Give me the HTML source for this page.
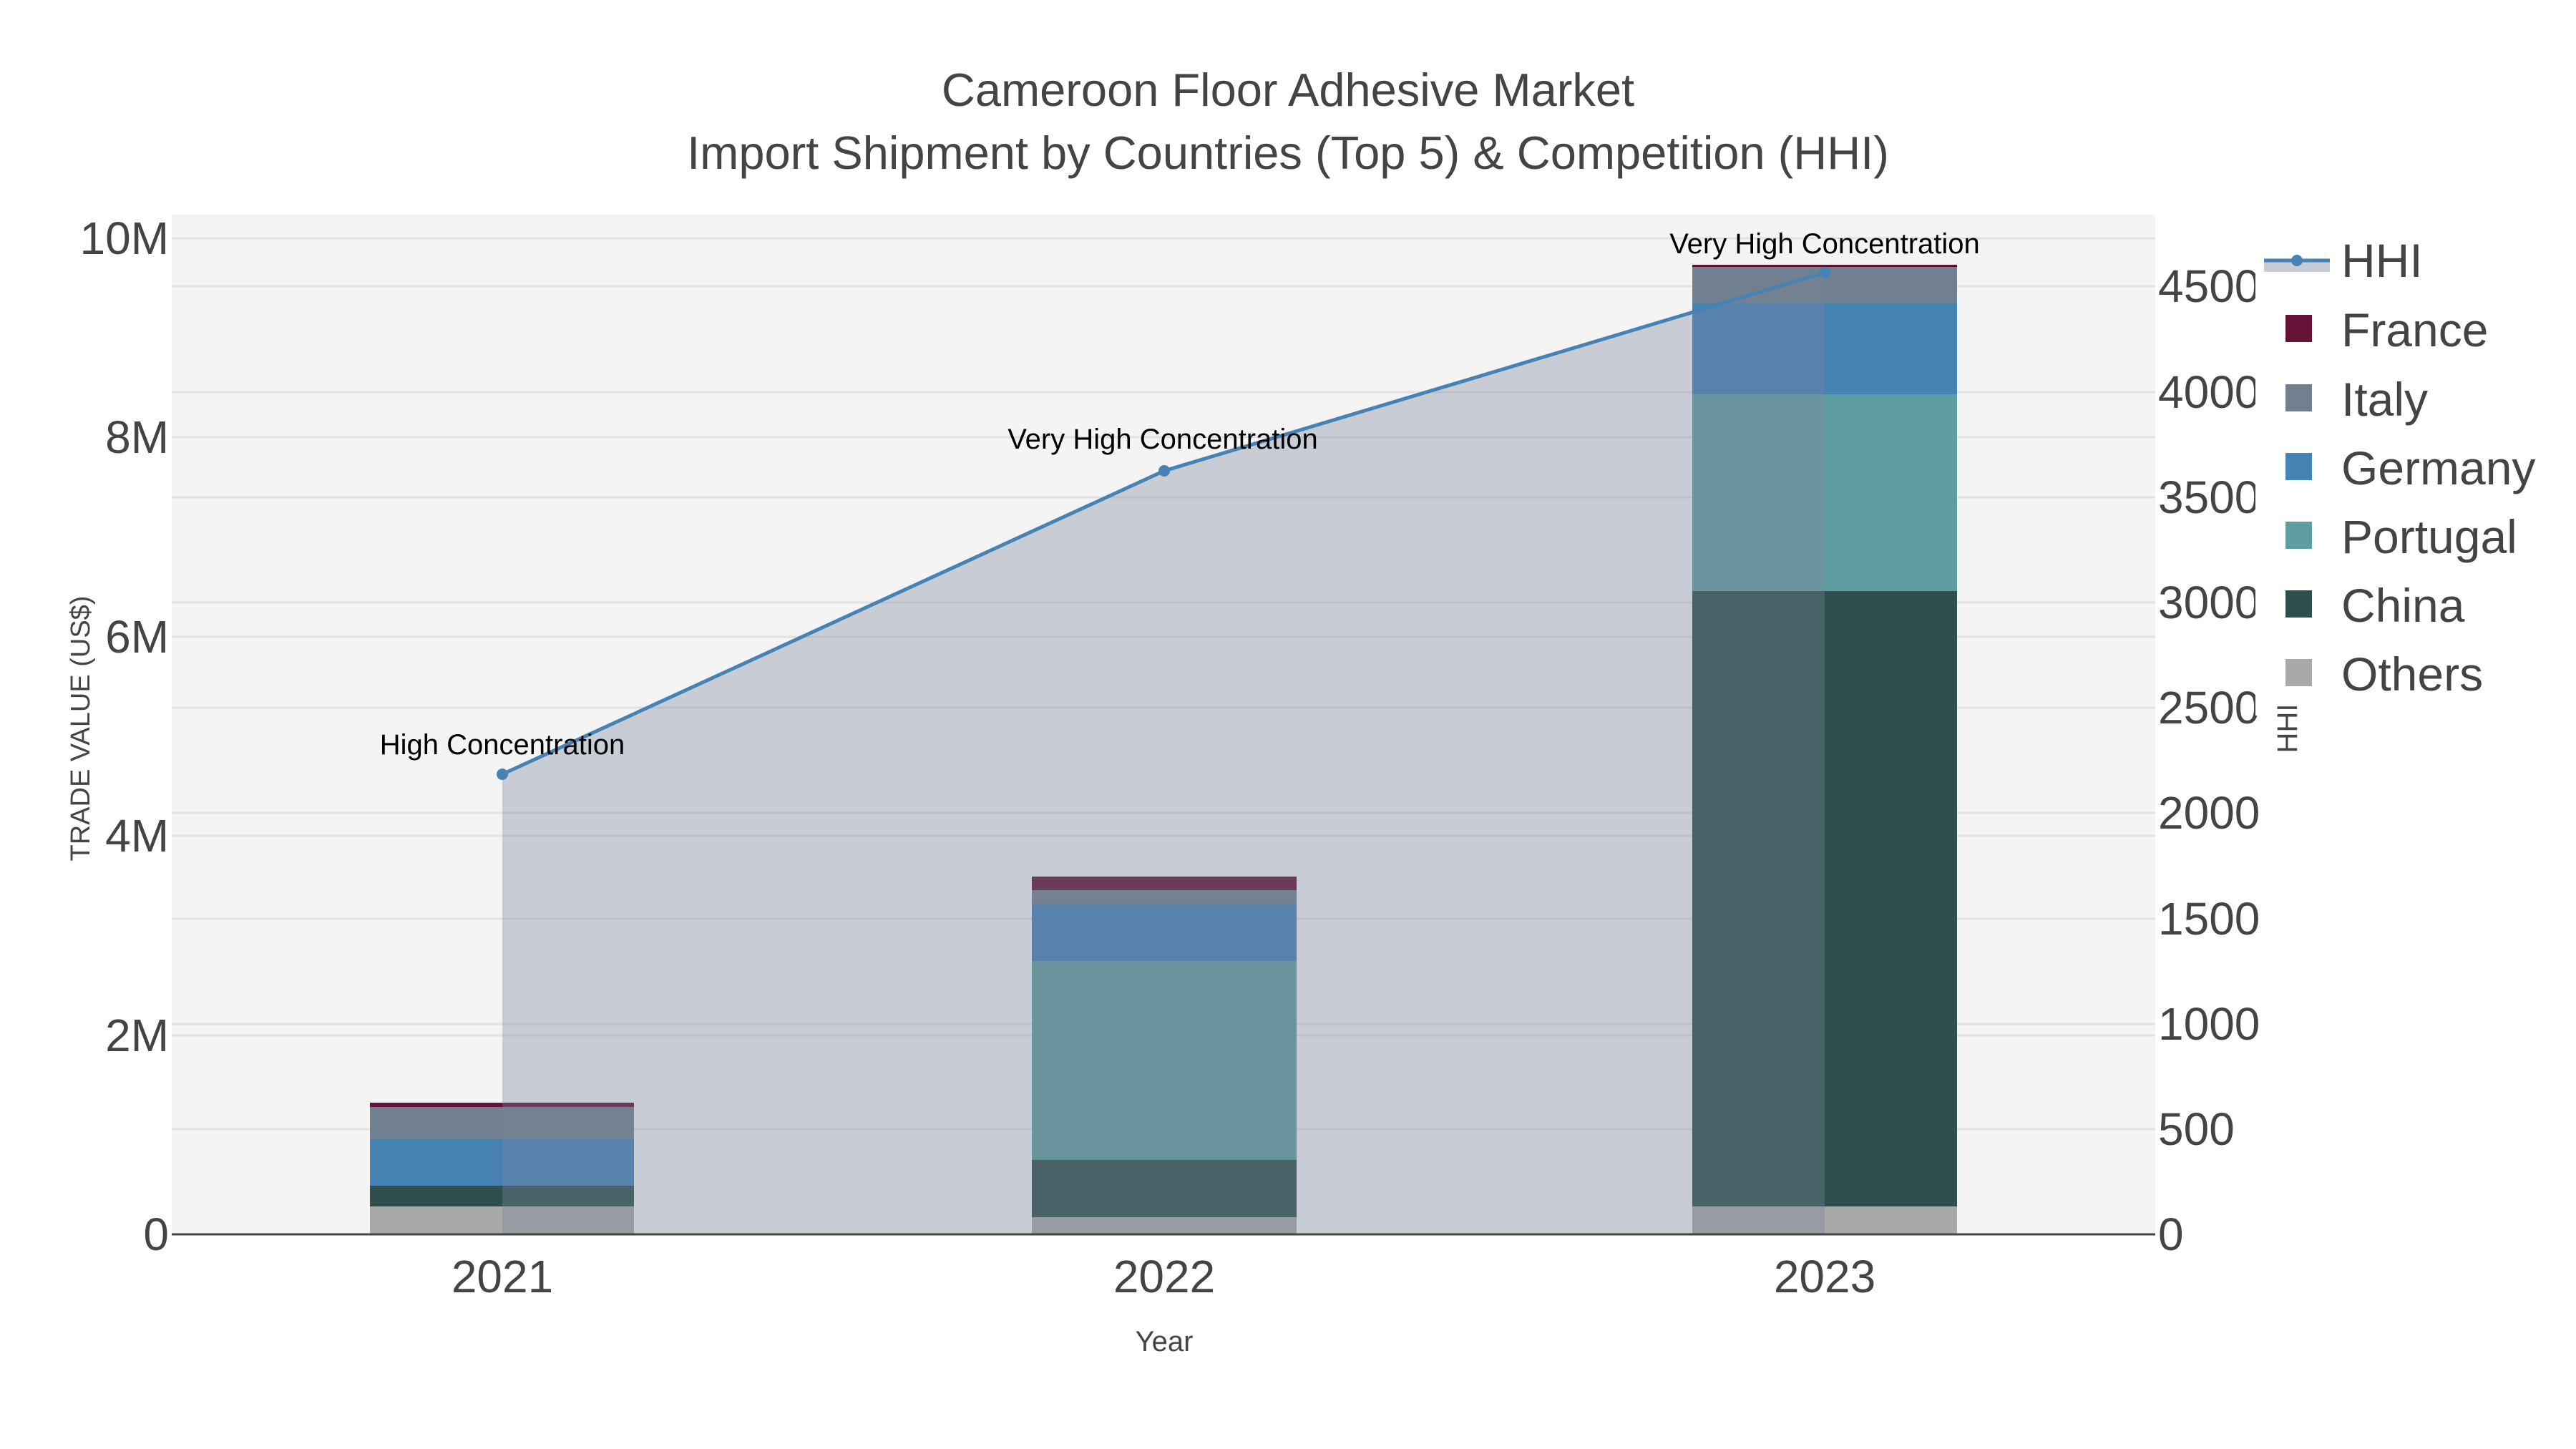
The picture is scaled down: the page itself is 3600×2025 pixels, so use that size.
<!DOCTYPE html>
<html><head><meta charset="utf-8"><style>html,body{margin:0;padding:0;background:#fff}svg{display:block}</style></head>
<body>
<svg width="3600" height="2025" viewBox="0 0 3600 2025" xmlns="http://www.w3.org/2000/svg" font-family="Liberation Sans, Arial, sans-serif">
<rect width="3600" height="2025" fill="#fff"/>
<rect x="240" y="300" width="2772" height="1425" fill="#f4f4f4"/>
<g stroke="#e2e2e2" stroke-width="3">
<line x1="240" x2="3012" y1="1447" y2="1447"/><line x1="240" x2="3012" y1="1168" y2="1168"/><line x1="240" x2="3012" y1="890" y2="890"/><line x1="240" x2="3012" y1="611" y2="611"/><line x1="240" x2="3012" y1="333" y2="333"/>
<line x1="240" x2="3012" y1="1578" y2="1578"/><line x1="240" x2="3012" y1="1431" y2="1431"/><line x1="240" x2="3012" y1="1284" y2="1284"/><line x1="240" x2="3012" y1="1136" y2="1136"/><line x1="240" x2="3012" y1="989" y2="989"/><line x1="240" x2="3012" y1="842" y2="842"/><line x1="240" x2="3012" y1="695" y2="695"/><line x1="240" x2="3012" y1="548" y2="548"/><line x1="240" x2="3012" y1="400" y2="400"/>
</g>
<!-- 2021 -->
<rect x="517" y="1686" width="369" height="39" fill="#a9a9a9"/>
<rect x="517" y="1657" width="369" height="29" fill="#2f4f4f"/>
<rect x="517" y="1592" width="369" height="65" fill="#4682b4"/>
<rect x="517" y="1547" width="369" height="45" fill="#708090"/>
<rect x="517" y="1541" width="369" height="6" fill="#641235"/>
<!-- 2022 -->
<rect x="1442" y="1701" width="370" height="24" fill="#a9a9a9"/>
<rect x="1442" y="1621" width="370" height="80" fill="#2f4f4f"/>
<rect x="1442" y="1343" width="370" height="278" fill="#5f9ea0"/>
<rect x="1442" y="1263" width="370" height="80" fill="#4682b4"/>
<rect x="1442" y="1244" width="370" height="19" fill="#708090"/>
<rect x="1442" y="1225" width="370" height="19" fill="#641235"/>
<!-- 2023 -->
<rect x="2365" y="1686" width="370" height="39" fill="#a9a9a9"/>
<rect x="2365" y="826" width="370" height="860" fill="#2f4f4f"/>
<rect x="2365" y="551" width="370" height="275" fill="#5f9ea0"/>
<rect x="2365" y="424" width="370" height="127" fill="#4682b4"/>
<rect x="2365" y="373" width="370" height="51" fill="#708090"/>
<rect x="2365" y="370" width="370" height="3" fill="#641235"/>
<polygon points="702,1082 1627,658 2550,381 2550,1725 702,1725" fill="rgb(120,131,154)" fill-opacity="0.355"/>
<line x1="240" x2="3012" y1="1725" y2="1725" stroke="#444" stroke-width="3"/>
<polyline points="702,1082 1627,658 2550,381" fill="none" stroke="#4682b4" stroke-width="5"/>
<circle cx="702" cy="1082" r="8" fill="#4682b4"/><circle cx="1627" cy="658" r="8" fill="#4682b4"/><circle cx="2550" cy="381" r="8" fill="#4682b4"/>
<g font-size="40" fill="#000" text-anchor="middle">
<text x="702" y="1054">High Concentration</text>
<text x="1625" y="627">Very High Concentration</text>
<text x="2550" y="354">Very High Concentration</text>
</g>
<g font-size="64" fill="#444" text-anchor="end">
<text x="236" y="1747">0</text><text x="236" y="1469">2M</text><text x="236" y="1190">4M</text><text x="236" y="912">6M</text><text x="236" y="633">8M</text><text x="236" y="355">10M</text>
</g>
<g font-size="64" fill="#444">
<text x="3016" y="1747">0</text><text x="3016" y="1600">500</text><text x="3016" y="1453">1000</text><text x="3016" y="1306">1500</text><text x="3016" y="1158">2000</text><text x="3016" y="1011">2500</text><text x="3016" y="864">3000</text><text x="3016" y="717">3500</text><text x="3016" y="570">4000</text><text x="3016" y="422">4500</text>
</g>
<rect x="3152" y="320" width="448" height="680" fill="#fff"/>
<g font-size="64" fill="#444" text-anchor="middle">
<text x="702" y="1806">2021</text><text x="1627" y="1806">2022</text><text x="2550" y="1806">2023</text>
</g>
<text x="1627" y="1888" font-size="40" fill="#444" text-anchor="middle">Year</text>
<text transform="translate(125,1018) rotate(-90)" font-size="38" fill="#444" text-anchor="middle">TRADE VALUE (US$)</text>
<text transform="translate(3210,1018) rotate(-90)" font-size="40" fill="#444" text-anchor="middle">HHI</text>
<g font-size="65" fill="#444" text-anchor="middle">
<text x="1800" y="148">Cameroon Floor Adhesive Market</text>
<text x="1800" y="236">Import Shipment by Countries (Top 5) &amp; Competition (HHI)</text>
</g>
<rect x="3164" y="366" width="92" height="14" fill="#c8ccd4"/>
<line x1="3164" x2="3256" y1="364" y2="364" stroke="#4682b4" stroke-width="5"/>
<circle cx="3210" cy="364" r="8" fill="#4682b4"/>
<rect x="3194" y="440" width="37" height="38" fill="#641235"/>
<rect x="3194" y="537" width="37" height="38" fill="#708090"/>
<rect x="3194" y="633" width="37" height="38" fill="#4682b4"/>
<rect x="3194" y="729" width="37" height="38" fill="#5f9ea0"/>
<rect x="3194" y="825" width="37" height="38" fill="#2f4f4f"/>
<rect x="3194" y="921" width="37" height="38" fill="#a9a9a9"/>
<g font-size="66" fill="#444">
<text x="3272" y="387">HHI</text>
<text x="3272" y="484">France</text>
<text x="3272" y="581">Italy</text>
<text x="3272" y="677">Germany</text>
<text x="3272" y="773">Portugal</text>
<text x="3272" y="869">China</text>
<text x="3272" y="965">Others</text>
</g>
</svg>
</body></html>
